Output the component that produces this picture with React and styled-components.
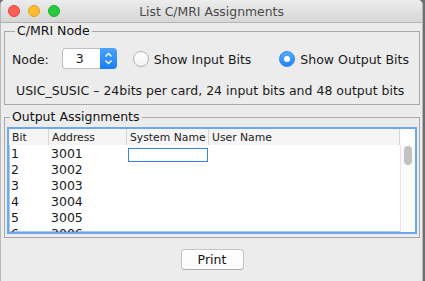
import React from "react";
import styled, { createGlobalStyle } from "styled-components";

const Global = createGlobalStyle`
  html, body { margin: 0; padding: 0; }
  body {
    background: #6e6e70;
    width: 425px;
    height: 281px;
    overflow: hidden;
    font-family: "DejaVu Sans", "Liberation Sans", sans-serif;
    font-size: 12px;
    color: #1a1a1a;
  }
`;

const Window = styled.div`
  width: 421px;
  height: 281px;
  background: #ececec;
  border-left: 1px solid #b9b9b9;
  border-right: 1px solid #b9b9b9;
  border-radius: 5px 5px 0 0;
  overflow: hidden;
  display: flex;
  flex-direction: column;
`;

const TitleBar = styled.div`
  height: 22px;
  flex: none;
  background: linear-gradient(#ececec, #d6d6d6);
  border-bottom: 1px solid #b3b3b3;
  display: flex;
  align-items: center;
  position: relative;
  padding-left: 7px;
  gap: 8px;
`;

const Light = styled.span`
  width: 12px;
  height: 12px;
  border-radius: 50%;
  box-sizing: border-box;
  background: ${(p) => p.$c};
  border: 1px solid ${(p) => p.$b};
`;

const Title = styled.div`
  position: absolute;
  left: 0;
  right: 0;
  text-align: center;
  font-size: 12.4px;
  color: #4a4a4a;
  pointer-events: none;
`;

const Group = styled.fieldset`
  margin: ${(p) => p.$mt}px 2px 0 3px;
  padding: ${(p) => p.$pt}px ${(p) => p.$px}px ${(p) => p.$pb}px;
  border: 1px solid #a9a9a9;
  border-radius: 0;
  min-width: 0;
`;

const Legend = styled.legend`
  margin-left: 3px;
  padding: 0 2px 0 2px;
  font-size: 12.5px;
  line-height: 14px;
  color: #111;
`;

const Row = styled.div`
  display: flex;
  align-items: center;
  height: 21px;
`;

const Label = styled.span`
  font-size: 12.5px;
  margin-left: ${(p) => p.$ml || 0}px;
  white-space: nowrap;
  padding-top: 1px;
`;

const Spinner = styled.div`
  display: flex;
  height: 21px;
  margin-left: 13px;
`;

const SpinField = styled.div`
  width: 38px;
  box-sizing: border-box;
  background: #fff;
  border: 1px solid #c0c0c0;
  border-right: none;
  border-radius: 4px 0 0 4px;
  display: flex;
  align-items: center;
  padding-left: 13px;
  font-size: 12.5px;
`;

const SpinStep = styled.div`
  width: 17px;
  background: linear-gradient(#4aa3fa, #1a7cf3);
  border-radius: 0 4px 4px 0;
  display: flex;
  align-items: center;
  justify-content: center;
`;

const Radio = styled.span`
  width: 16px;
  height: 16px;
  box-sizing: border-box;
  border-radius: 50%;
  margin-left: ${(p) => p.$ml}px;
  display: flex;
  align-items: center;
  justify-content: center;
  background: ${(p) => (p.$on ? "linear-gradient(#5aaefc, #1f82f6)" : "linear-gradient(#ffffff, #f3f3f3)")};
  border: 1px solid ${(p) => (p.$on ? "#2f86ec" : "#b3b3b3")};
  &::after {
    content: "";
    display: ${(p) => (p.$on ? "block" : "none")};
    width: 6px;
    height: 6px;
    border-radius: 50%;
    background: #fff;
  }
`;

const Info = styled.div`
  margin-top: 15px;
  padding-left: 4px;
  font-size: 12.5px;
  line-height: 14px;
  white-space: nowrap;
`;

const ScrollPane = styled.div`
  height: 103px;
  border: 2px solid #6ca8ea;
  box-shadow: inset 0 0 0 1px #a9cbf2;
  background: #fff;
  display: flex;
  overflow: hidden;
`;

const TableArea = styled.div`
  flex: 1;
  display: flex;
  flex-direction: column;
  overflow: hidden;
`;

const HeaderRow = styled.div`
  display: grid;
  grid-template-columns: 40px 78px 82px 1fr;
  height: 16px;
  background: #f5f5f5;
  flex: none;
`;

const HeadCell = styled.div`
  font-size: 10.8px;
  padding-left: 3px;
  color: #222;
  border-right: 1px solid #d6d6d6;
  white-space: nowrap;
  overflow: hidden;
  display: flex;
  align-items: center;
`;

const DataRow = styled.div`
  display: grid;
  grid-template-columns: 40px 78px 82px 1fr;
  height: 16px;
  flex: none;
`;

const Cell = styled.div`
  font-size: 12.5px;
  line-height: 16px;
  padding-left: 2px;
  padding-top: 1px;
  white-space: nowrap;
  display: flex;
  align-items: center;
`;

const EditBox = styled.div`
  width: 80px;
  height: 14px;
  box-sizing: border-box;
  border: 1px solid #3d80d8;
  background: #fff;
  margin-left: -1px;
  margin-top: 1px;
`;

const ScrollCol = styled.div`
  width: 15px;
  flex: none;
  display: flex;
  flex-direction: column;
`;

const Corner = styled.div`
  height: 16px;
  flex: none;
  background: #fff;
`;

const Track = styled.div`
  flex: 1;
  border-left: 1px solid #e6e6e6;
  background: #fafafa;
  padding: 1px 0 0 3px;
`;

const Thumb = styled.div`
  width: 8px;
  height: 19px;
  border-radius: 4px;
  background: #c2c2c2;
`;

const Footer = styled.div`
  display: flex;
  justify-content: center;
  padding-top: 11px;
`;

const Button = styled.button`
  width: 63px;
  height: 21px;
  box-sizing: border-box;
  background: linear-gradient(#ffffff, #fbfbfb);
  border: 1px solid #c3c3c3;
  border-bottom-color: #adadad;
  border-radius: 4px;
  font-family: "DejaVu Sans", "Liberation Sans", sans-serif;
  font-size: 12.5px;
  color: #111;
  padding: 0;
  margin-left: 1px;
`;

const rows = [
  ["1", "3001"],
  ["2", "3002"],
  ["3", "3003"],
  ["4", "3004"],
  ["5", "3005"],
  ["6", "3006"],
];

export default function App() {
  return (
    <>
      <Global />
      <Window>
        <TitleBar>
          <Light $c="#fc5f57" $b="#e0443e" />
          <Light $c="#fdbc2e" $b="#dea123" />
          <Light $c="#28c840" $b="#1dad2b" />
          <Title>List C/MRI Assignments</Title>
        </TitleBar>

        <Group $mt={1} $pt={10} $px={7} $pb={6}>
          <Legend>C/MRI Node</Legend>
          <Row>
            <Label>Node:</Label>
            <Spinner>
              <SpinField>3</SpinField>
              <SpinStep>
                <svg width="9" height="15" viewBox="0 0 9 15">
                  <path d="M1.5 5.5 L4.5 2.5 L7.5 5.5" fill="none" stroke="#fff" strokeWidth="1.4" />
                  <path d="M1.5 9.5 L4.5 12.5 L7.5 9.5" fill="none" stroke="#fff" strokeWidth="1.4" />
                </svg>
              </SpinStep>
            </Spinner>
            <Radio $ml={16} />
            <Label $ml={5}>Show Input Bits</Label>
            <Radio $ml={28} $on />
            <Label $ml={5}>Show Output Bits</Label>
          </Row>
          <Info>USIC_SUSIC – 24bits per card, 24 input bits and 48 output bits</Info>
        </Group>

        <Group $mt={5} $pt={3} $px={2} $pb={3}>
          <Legend>Output Assignments</Legend>
          <ScrollPane>
            <TableArea>
              <HeaderRow>
                <HeadCell>Bit</HeadCell>
                <HeadCell>Address</HeadCell>
                <HeadCell>System Name</HeadCell>
                <HeadCell>User Name</HeadCell>
              </HeaderRow>
              {rows.map(([b, a], i) => (
                <DataRow key={b}>
                  <Cell>{b}</Cell>
                  <Cell>{a}</Cell>
                  <Cell>{i === 0 ? <EditBox /> : null}</Cell>
                  <Cell />
                </DataRow>
              ))}
            </TableArea>
            <ScrollCol>
              <Corner />
              <Track>
                <Thumb />
              </Track>
            </ScrollCol>
          </ScrollPane>
        </Group>

        <Footer>
          <Button>Print</Button>
        </Footer>
      </Window>
    </>
  );
}
